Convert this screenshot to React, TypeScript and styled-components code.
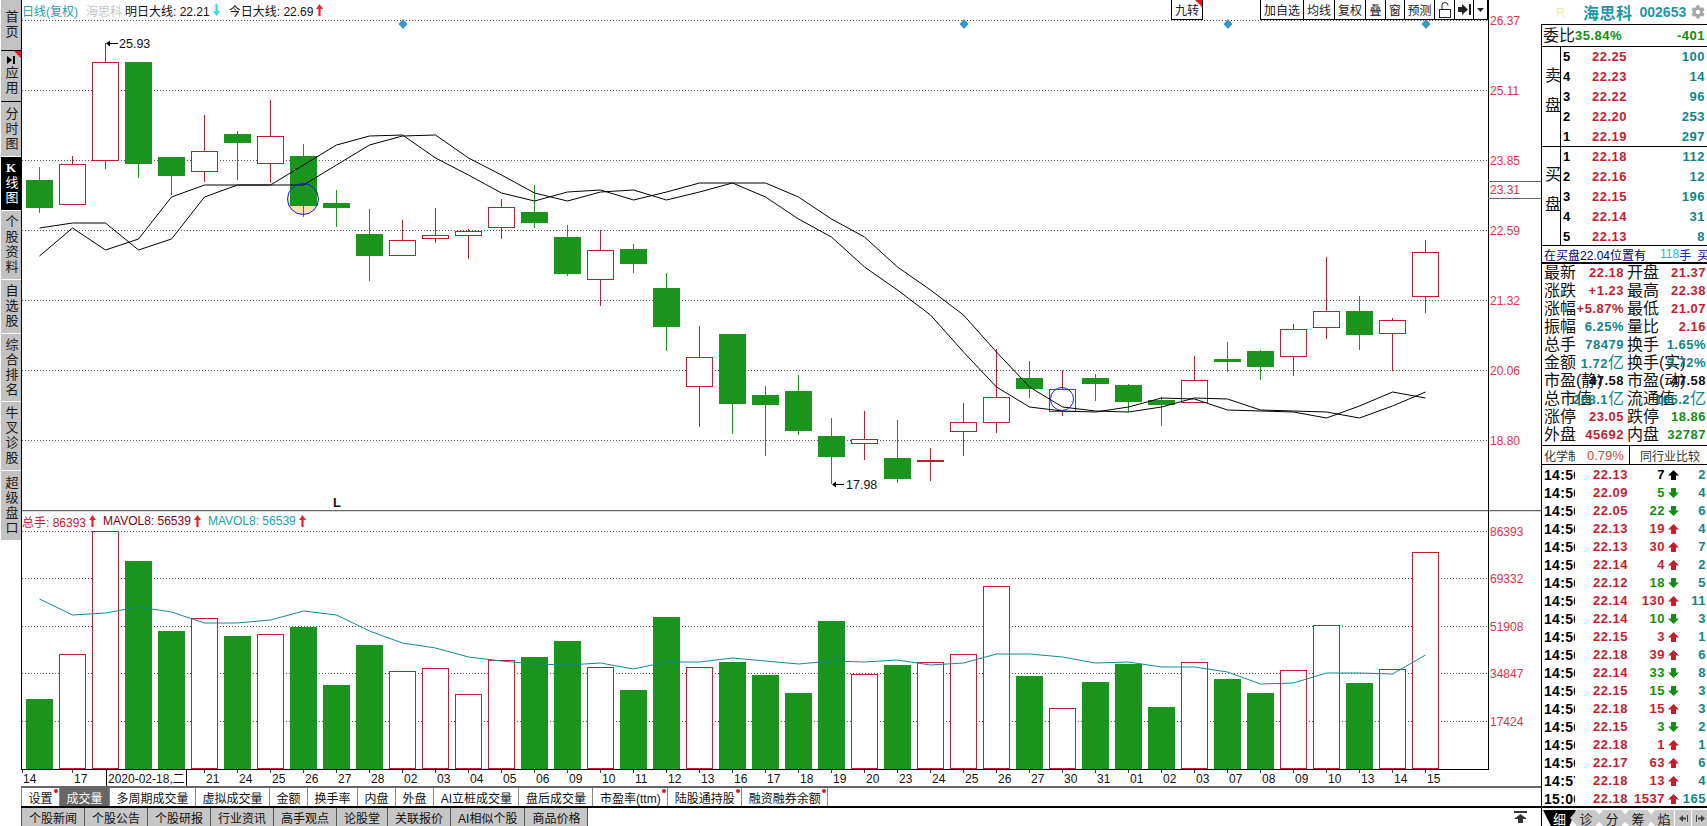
import React from "react";
import styled, { createGlobalStyle } from "styled-components";
import { FaCog } from "react-icons/fa";

const FONT = '"Liberation Sans", "Noto Sans CJK SC", sans-serif';
const RED = "#c41e2e";
const AXIS_RED = "#e4304a";
const GREEN = "#1a941c";
const TEXT_GREEN = "#109010";
const TEAL = "#108488";

const GlobalStyle = createGlobalStyle`
  html, body { margin: 0; padding: 0; background: #fff; overflow: hidden; }
  #root { width: 1707px; height: 826px; }
  * { box-sizing: border-box; }
`;

// [high, body top, body bottom, low, up?] all in page pixels
type Candle = [number, number, number, number, boolean];
const candles: Candle[] = [
  [167, 180, 208, 213, false], [156, 164, 204, 204, true], [43, 62, 160, 169, true], [62, 62, 164, 178, false],
  [157, 157, 176, 195, false], [115, 151, 171, 182, true], [131, 134, 143, 180, false], [100, 136, 163, 183, true],
  [144, 156, 206, 217, false], [190, 203, 208, 227, false], [209, 234, 256, 281, false], [220, 240, 255, 255, true],
  [208, 235, 238, 243, true], [229, 231, 235, 259, true], [199, 207, 227, 239, true], [185, 212, 223, 228, false],
  [225, 237, 274, 276, false], [230, 250, 279, 306, true], [244, 249, 264, 273, false], [273, 288, 327, 351, false],
  [326, 357, 386, 427, true], [334, 334, 404, 434, false], [386, 395, 405, 456, false], [375, 391, 431, 435, false],
  [418, 436, 457, 484, false], [411, 439, 443, 460, true], [420, 458, 479, 483, false], [448, 461, 461, 481, true],
  [403, 422, 431, 456, true], [349, 397, 422, 433, true], [361, 378, 389, 398, false], [370, 389, 411, 416, true],
  [374, 378, 384, 401, false], [384, 385, 402, 412, false], [397, 400, 405, 426, false], [356, 380, 402, 402, true],
  [342, 359, 362, 372, false], [350, 351, 367, 380, false], [324, 329, 356, 376, true], [257, 311, 327, 339, true],
  [296, 311, 335, 350, false], [318, 320, 333, 371, true], [240, 252, 296, 313, true],
];

const fastLine = [
  256, 228, 250, 239, 197, 185, 185, 185, 165, 145, 136, 135, 158, 175, 193, 201, 192, 190, 200, 192, 183, 183,
  197, 219, 237, 267, 290, 315, 352, 387, 407, 411, 412, 407, 398, 399, 410, 411, 412, 418, 406, 392, 398,
];
const slowLine = [228, 223, 223, ...fastLine.slice(2, 42)];

const volumeTops = [
  699, 654, 531, 561, 631, 618, 636, 634, 627, 685, 645, 671, 668, 694, 660, 657, 641, 667, 690, 617, 667, 662,
  675, 693, 621, 674, 665, 662, 654, 586, 676, 708, 682, 664, 707, 662, 679, 693, 670, 625, 683, 669, 552,
];

const volumeMa = [
  599, 615, 613, 607, 612, 623, 623, 620, 611, 615, 631, 643, 648, 657, 661, 664, 665, 663, 669, 662, 662, 658,
  661, 664, 661, 662, 660, 665, 663, 654, 654, 657, 663, 662, 667, 667, 672, 684, 683, 673, 673, 674, 655,
];

const dates = [
  "14", "17", "", "", "", "21", "24", "25", "26", "27", "28", "02", "03", "04", "05", "06", "09", "10", "11", "12",
  "13", "16", "17", "18", "19", "20", "23", "24", "25", "26", "27", "30", "31", "01", "02", "03", "07", "08", "09",
  "10", "13", "14", "15",
];

const priceGrid = [20, 90, 160, 230, 300, 370, 440];
const priceLabels: [string, number][] = [
  ["26.37", 25], ["25.11", 95], ["23.85", 165], ["23.31", 194], ["22.59", 235], ["21.32", 305], ["20.06", 375], ["18.80", 445],
];
const volumeGrid: [number, string][] = [[531, "86393"], [578, "69332"], [626, "51908"], [673, "34847"], [721, "17424"]];
const diamonds = [403, 964, 1228, 1426];

const cx = (i: number) => 39.5 + 33 * i;
const points = (values: number[]) => values.map((y, i) => `${cx(i)},${y}`).join(" ");

const Page = styled.div`
  width: 1707px;
  height: 826px;
  display: grid;
  grid-template-columns: 21px 1520px 166px;
  font-family: ${FONT};
  color: #000;
  background: #fff;
  overflow: hidden;
`;

const Sidebar = styled.nav`
  display: flex;
  flex-direction: column;
  gap: 1px;
  padding-left: 1px;
`;

const SideButton = styled.div<{ $h: number; $active?: boolean; $shadow?: boolean }>`
  position: relative;
  height: ${(p) => p.$h}px;
  background: ${(p) => (p.$active ? "#000" : "#c2c2c2")};
  color: ${(p) => (p.$active ? "#fff" : "#1a1a1a")};
  box-shadow: ${(p) => (p.$shadow ? "0 1px 0 #000" : "none")};
  display: flex;
  flex-direction: column;
  align-items: center;
  justify-content: center;
  gap: 2px;
  font-size: 13px;
  line-height: 13px;
`;

const SideLabel = styled.span`
  writing-mode: vertical-rl;
  text-orientation: upright;
  letter-spacing: 2px;
`;

const SideLetter = styled.b`
  font-family: "Liberation Serif", serif;
`;

const Corner = styled.i<{ $size: number }>`
  position: absolute;
  top: 0;
  right: 0;
  width: 0;
  height: 0;
  border-top: ${(p) => p.$size}px solid #f01020;
  border-left: ${(p) => p.$size}px solid transparent;
`;

const Main = styled.main`
  display: flex;
  flex-direction: column;
`;

const ChartFrame = styled.div`
  border-left: 1px solid #000;
  height: 770px;
`;

const Pane = styled.section`
  position: relative;
`;

const ChartSvg = styled.svg`
  display: block;
  font-family: "Liberation Sans", sans-serif;
`;

const Legend = styled.div<{ $top: number }>`
  position: absolute;
  left: 0;
  top: ${(p) => p.$top}px;
  height: 20px;
  display: flex;
  align-items: center;
  font-size: 12px;
  white-space: nowrap;
`;

const LegendText = styled.span<{ $color: string; $ml?: number }>`
  color: ${(p) => p.$color};
  margin-left: ${(p) => p.$ml ?? 0}px;
`;

const Toolbar = styled.div`
  position: absolute;
  top: 0;
  right: 53px;
  display: flex;
  gap: 58px;
`;

const ToolGroup = styled.div`
  display: flex;
`;

const ToolButton = styled.div<{ $w: number }>`
  position: relative;
  width: ${(p) => p.$w}px;
  height: 20px;
  background: #fff;
  border: 1px solid #000;
  border-top: 0;
  margin-left: -1px;
  display: flex;
  align-items: center;
  justify-content: center;
  font-size: 12px;
  color: #222;
  white-space: nowrap;
`;

const DateStrip = styled.div`
  height: 16px;
`;

const TabRow = styled.div<{ $line: string; $h: number }>`
  height: ${(p) => p.$h}px;
  border-top: ${(p) => p.$line};
  display: flex;
  align-items: stretch;
  background: #fff;
`;

const MetricTab = styled.div<{ $active?: boolean; $dot?: boolean }>`
  position: relative;
  padding: 0 6.5px;
  border-left: 1px solid #888;
  display: flex;
  align-items: center;
  font-size: 12px;
  white-space: nowrap;
  color: ${(p) => (p.$active ? "#fff" : "#111")};
  background: ${(p) => (p.$active ? "#666" : "#fff")};
  &:last-of-type { border-right: 1px solid #888; }
  &::after {
    content: "";
    display: ${(p) => (p.$dot ? "block" : "none")};
    position: absolute;
    top: 1px;
    right: 1px;
    width: 4px;
    height: 4px;
    border-radius: 50%;
    background: #f01020;
  }
`;

const NewsTab = styled.div`
  padding: 0 7px;
  background: #c6c6c6;
  border-left: 1px solid #555;
  border-right: 1px solid #555;
  margin-right: -1px;
  display: flex;
  align-items: center;
  font-size: 12px;
  white-space: nowrap;
  color: #111;
`;

const TopButton = styled.div`
  margin-left: auto;
  margin-right: 14px;
  display: flex;
  align-items: center;
`;

const Panel = styled.aside`
  display: flex;
  flex-direction: column;
`;

const QuoteHead = styled.header`
  height: 24px;
  display: flex;
  align-items: center;
  padding-left: 15px;
  white-space: nowrap;
  color: #1c98a4;
  font-weight: 700;
`;

const HeadMark = styled.span`
  width: 27px;
  font-size: 13px;
  font-weight: 400;
  color: #f0f0a0;
`;

const HeadName = styled.span`
  font-size: 16px;
  letter-spacing: 0.5px;
`;

const HeadCode = styled.span`
  font-size: 14px;
  margin-left: 7px;
  margin-right: 5px;
`;

const PanelBody = styled.div`
  border-left: 1px solid #000;
  border-top: 1px solid #000;
  display: flex;
  flex-direction: column;
`;

const Label = styled.span`
  font-size: 16px;
  line-height: 18px;
  white-space: nowrap;
  color: #111;
`;

const Num = styled.span<{ $color: string }>`
  font-size: 13px;
  font-weight: 700;
  letter-spacing: 0.5px;
  line-height: 18px;
  white-space: nowrap;
  color: ${(p) => p.$color};
`;

const RatioRow = styled.div`
  height: 22px;
  border-bottom: 1px solid #000;
  display: flex;
  align-items: center;
  justify-content: space-between;
  padding: 0 2px 0 1px;
`;

const RatioLeft = styled.div`
  display: flex;
  align-items: center;
`;

const BookSide = styled.div<{ $h: number; $line?: boolean }>`
  height: ${(p) => p.$h}px;
  overflow: hidden;
  display: flex;
  border-bottom: ${(p) => (p.$line ? "1px solid #000" : "0")};
`;

const BookTitle = styled.div`
  width: 19px;
  flex: none;
  border-right: 1px solid #000;
  display: flex;
  align-items: center;
  justify-content: center;
  writing-mode: vertical-rl;
  text-orientation: upright;
  font-size: 16px;
  letter-spacing: 14px;
  color: #111;
`;

const BookRows = styled.div`
  flex: 1;
`;

const BookRow = styled.div`
  height: 20px;
  display: grid;
  grid-template-columns: 11px 57px 1fr;
  align-items: center;
  padding: 0 2px 0 2px;
`;

const Level = styled.span`
  font-size: 13px;
  font-weight: 700;
  line-height: 18px;
`;

const BookPrice = styled(Num)`
  justify-self: end;
  padding-right: 4px;
`;

const BookQty = styled(Num)`
  justify-self: end;
`;

const Notice = styled.div`
  height: 19px;
  border-top: 1px solid #000;
  border-bottom: 2px solid #000;
  display: flex;
  align-items: center;
  padding-left: 2px;
  font-size: 12px;
  color: #000080;
  white-space: nowrap;
  overflow: hidden;
`;

const NoticeCyan = styled.span`
  color: #10c0c8;
  margin-left: 14px;
`;

const NoticeBlue = styled.span`
  color: #0030d0;
`;

const NoticeEnd = styled.span`
  margin-left: 6px;
`;

const Stats = styled.div`
  display: grid;
  grid-template-columns: 83px 83px;
  grid-auto-rows: 18px;
  padding-bottom: 1px;
`;

const StatCell = styled.div<{ $left?: boolean }>`
  display: grid;
  padding: ${(p) => (p.$left ? "0 1px 0 2px" : "0 2px 0 2px")};
  > * { grid-area: 1 / 1; }
`;

const StatValue = styled(Num)`
  justify-self: end;
`;

const Yi = styled.span`
  font-size: 16px;
  font-weight: 400;
  letter-spacing: 0;
`;

const SectorRow = styled.div`
  height: 20px;
  border-top: 1px solid #000;
  border-bottom: 1px solid #000;
  display: flex;
  align-items: center;
  font-size: 12px;
  color: #333;
`;

const SectorName = styled.span`
  width: 31px;
  margin-left: 2px;
  overflow: hidden;
  white-space: nowrap;
`;

const SectorPct = styled.span`
  width: 54px;
  font-size: 13px;
  color: #d84040;
  padding-left: 12px;
`;

const SectorCompare = styled.span`
  flex: 1;
  align-self: stretch;
  border-left: 1px solid #000;
  display: flex;
  align-items: center;
  padding-left: 10px;
  white-space: nowrap;
`;

const Trades = styled.div`
  height: 341px;
  padding-top: 1px;
  overflow: hidden;
`;

const TradeRow = styled.div`
  height: 18px;
  display: grid;
  grid-template-columns: 31px 53px 37px 17px 24px;
  align-items: center;
  padding-left: 2px;
`;

const TradeTime = styled.span`
  font-size: 14px;
  font-weight: 700;
  letter-spacing: 0.3px;
  overflow: hidden;
  white-space: nowrap;
`;

const TradeNum = styled(Num)`
  justify-self: end;
`;

const TradeArrow = styled.svg`
  justify-self: center;
`;

const ViewTabs = styled.div`
  height: 20px;
  border-top: 2px solid #000;
  border-left: 1px solid #000;
  display: flex;
  align-items: flex-end;
  padding-left: 1px;
`;

const ViewTab = styled.div<{ $active?: boolean }>`
  flex: none;
  width: ${(p) => (p.$active ? 33 : 32)}px;
  height: 16px;
  margin-right: -6px;
  display: flex;
  align-items: center;
  justify-content: center;
  font-size: 13px;
  color: ${(p) => (p.$active ? "#fff" : "#222")};
  background: ${(p) => (p.$active ? "#000" : "#c8c8c8")};
  clip-path: ${(p) =>
    p.$active
      ? "polygon(0 0, 100% 0, 80% 100%, 24% 100%)"
      : "polygon(22% 0, 80% 0, 100% 50%, 80% 100%, 22% 100%, 0 50%)"};
`;

const ScrollGroup = styled.div`
  margin-left: auto;
  display: flex;
  position: relative;
`;

const ScrollButton = styled.div`
  width: 17px;
  height: 16px;
  background: #c8c8c8;
  border-left: 1px solid #fff;
  display: flex;
  align-items: center;
  justify-content: center;
`;

function BigArrow({ up, color }: { up: boolean; color: string }) {
  return (
    <svg width="7" height="12" viewBox="0 0 7 12" style={{ transform: up ? "none" : "rotate(180deg)", marginLeft: 3 }}>
      <polygon points="3.5,0 7,5 4.6,5 4.6,12 2.4,12 2.4,5 0,5" fill={color} />
    </svg>
  );
}

function CandleMark({ c, i }: { c: Candle; i: number }) {
  const [high, top, bottom, low, up] = c;
  const x = cx(i);
  const color = up ? RED : GREEN;
  return (
    <g>
      <line x1={x} x2={x} y1={high} y2={low} stroke={color} strokeWidth="1" shapeRendering="crispEdges" />
      {top === bottom ? (
        <rect x={x - 13.5} y={top - 1} width={27} height={2} fill={color} shapeRendering="crispEdges" />
      ) : up ? (
        <rect x={x - 13} y={top + 0.5} width={26} height={bottom - top} fill="#fff" stroke={RED} strokeWidth="1" shapeRendering="crispEdges" />
      ) : (
        <rect x={x - 13.5} y={top} width={27} height={bottom - top} fill={GREEN} shapeRendering="crispEdges" />
      )}
    </g>
  );
}

function PriceChart() {
  return (
    <ChartSvg width="1519" height="510" viewBox="22 0 1519 510">
      {priceGrid.map((y) => (
        <line key={y} x1="22" x2="1488" y1={y + 0.5} y2={y + 0.5} stroke="#555" strokeDasharray="1 2" shapeRendering="crispEdges" />
      ))}
      {diamonds.map((x) => (
        <polygon key={x} points={`${x},19 ${x + 4.5},24 ${x},29 ${x - 4.5},24`} fill="#3399c8" />
      ))}
      <circle cx="303" cy="199" r="15.5" fill="#f8e0b0" />
      {candles.map((c, i) => (
        <CandleMark key={i} c={c} i={i} />
      ))}
      <polyline points={points(fastLine)} fill="none" stroke="#000" strokeWidth="1" />
      <polyline points={points(slowLine)} fill="none" stroke="#000" strokeWidth="1" />
      <circle cx="303" cy="199" r="15.5" fill="none" stroke="#1020e0" strokeWidth="1" />
      <circle cx="1062" cy="399" r="11.5" fill="none" stroke="#1020e0" strokeWidth="1" />
      <polygon points="106,43.5 110,40.5 110,46.5" fill="#000" />
      <line x1="109" x2="118" y1="43.5" y2="43.5" stroke="#000" />
      <text x="119" y="48" fontSize="12.5" fill="#111">25.93</text>
      <polygon points="832,484.5 836,481.5 836,487.5" fill="#000" />
      <line x1="835" x2="844" y1="484.5" y2="484.5" stroke="#000" />
      <text x="846" y="489" fontSize="12.5" fill="#111">17.98</text>
      <text x="333" y="507" fontSize="13" fontWeight="700" fill="#111">L</text>
      <line x1="1488.5" x2="1488.5" y1="0" y2="510" stroke="#000" shapeRendering="crispEdges" />
      <line x1="1488" x2="1541" y1="181.5" y2="181.5" stroke="#666" shapeRendering="crispEdges" />
      <line x1="1488" x2="1541" y1="198.5" y2="198.5" stroke="#666" shapeRendering="crispEdges" />
      {priceLabels.map(([t, y]) => (
        <text key={t} x="1490" y={y} fontSize="12" fill={AXIS_RED}>{t}</text>
      ))}
    </ChartSvg>
  );
}

function VolumeChart() {
  return (
    <ChartSvg width="1519" height="260" viewBox="22 510 1519 260">
      <line x1="22" x2="1541" y1="510.5" y2="510.5" stroke="#666" strokeWidth="1.5" />
      {volumeGrid.map(([y]) => (
        <line key={y} x1="22" x2="1488" y1={y + 0.5} y2={y + 0.5} stroke="#555" strokeDasharray="1 2" shapeRendering="crispEdges" />
      ))}
      {volumeTops.map((top, i) =>
        candles[i][4] ? (
          <rect key={i} x={cx(i) - 13} y={top + 0.5} width={26} height={768 - top} fill="#fff" stroke={RED} shapeRendering="crispEdges" />
        ) : (
          <rect key={i} x={cx(i) - 13.5} y={top} width={27} height={769 - top} fill={GREEN} shapeRendering="crispEdges" />
        )
      )}
      <polyline points={points(volumeMa)} fill="none" stroke="#0f8890" strokeWidth="1" />
      <line x1="1488.5" x2="1488.5" y1="510" y2="770" stroke="#000" shapeRendering="crispEdges" />
      <line x1="22" x2="1489" y1="769.5" y2="769.5" stroke="#000" shapeRendering="crispEdges" />
      {volumeGrid.map(([y, t]) => (
        <text key={t} x="1490" y={y + 5} fontSize="12" fill={AXIS_RED}>{t}</text>
      ))}
    </ChartSvg>
  );
}

function DateAxis() {
  return (
    <DateStrip>
      <ChartSvg width="1520" height="16" viewBox="21 770 1520 16">
        {dates.map((d, i) =>
          d ? (
            <g key={i}>
              <line x1={i === 0 ? 22.5 : cx(i)} x2={i === 0 ? 22.5 : cx(i)} y1="770" y2="773" stroke="#333" shapeRendering="crispEdges" />
              <text x={i === 0 ? 23 : cx(i) + 1.5} y="783" fontSize="12" fill="#111">{d}</text>
            </g>
          ) : null
        )}
        <line x1="106.5" x2="106.5" y1="770" y2="786" stroke="#000" shapeRendering="crispEdges" />
        <line x1="186.5" x2="186.5" y1="770" y2="786" stroke="#000" shapeRendering="crispEdges" />
        <text x="108" y="783" fontSize="12" fill="#111" fontFamily={FONT}>2020-02-18,二</text>
      </ChartSvg>
    </DateStrip>
  );
}

type Stat = { label: string; value: string; color: string; unit?: string };
const statsRows: Stat[] = [
  { label: "最新", value: "22.18", color: RED }, { label: "开盘", value: "21.37", color: RED },
  { label: "涨跌", value: "+1.23", color: RED }, { label: "最高", value: "22.38", color: RED },
  { label: "涨幅", value: "+5.87%", color: RED }, { label: "最低", value: "21.07", color: RED },
  { label: "振幅", value: "6.25%", color: TEAL }, { label: "量比", value: "2.16", color: RED },
  { label: "总手", value: "78479", color: TEAL }, { label: "换手", value: "1.65%", color: TEAL },
  { label: "金额", value: "1.72", color: TEAL, unit: "亿" }, { label: "换手(实)", value: "3.72%", color: TEAL },
  { label: "市盈(静)", value: "47.58", color: "#111" }, { label: "市盈(动)", value: "47.58", color: "#111" },
  { label: "总市值", value: "208.1", color: TEAL, unit: "亿" }, { label: "流通值", value: "105.2", color: TEAL, unit: "亿" },
  { label: "涨停", value: "23.05", color: RED }, { label: "跌停", value: "18.86", color: TEXT_GREEN },
  { label: "外盘", value: "45692", color: RED }, { label: "内盘", value: "32787", color: TEXT_GREEN },
];

const asks: [number, string, string][] = [[5, "22.25", "100"], [4, "22.23", "14"], [3, "22.22", "96"], [2, "22.20", "253"], [1, "22.19", "297"]];
const bids: [number, string, string][] = [[1, "22.18", "112"], [2, "22.16", "12"], [3, "22.15", "196"], [4, "22.14", "31"], [5, "22.13", "8"]];

// time, price, volume, direction (r/g/k), count
type Trade = [string, string, string, "r" | "g" | "k", string];
const trades: Trade[] = [
  ["14:56", "22.13", "7", "k", "2"], ["14:56", "22.09", "5", "g", "4"], ["14:56", "22.05", "22", "g", "6"],
  ["14:56", "22.13", "19", "r", "4"], ["14:56", "22.13", "30", "r", "7"], ["14:56", "22.14", "4", "r", "2"],
  ["14:56", "22.12", "18", "g", "5"], ["14:56", "22.14", "130", "r", "11"], ["14:56", "22.14", "10", "g", "3"],
  ["14:56", "22.15", "3", "r", "1"], ["14:56", "22.18", "39", "r", "6"], ["14:56", "22.14", "33", "g", "8"],
  ["14:56", "22.15", "15", "g", "3"], ["14:56", "22.18", "15", "r", "3"], ["14:56", "22.15", "3", "g", "2"],
  ["14:56", "22.18", "1", "r", "1"], ["14:56", "22.17", "63", "r", "6"], ["14:57", "22.18", "13", "r", "4"],
  ["15:00", "22.18", "1537", "r", "165"],
];

const tradeColors = { r: RED, g: TEXT_GREEN, k: "#000" };

function TradeRowItem({ t }: { t: Trade }) {
  const [time, price, vol, dir, count] = t;
  const color = tradeColors[dir];
  return (
    <TradeRow>
      <TradeTime>{time}</TradeTime>
      <TradeNum $color={RED}>{price}</TradeNum>
      <TradeNum $color={color}>{vol}</TradeNum>
      <TradeArrow width="11" height="10" viewBox="0 0 11 10" style={{ transform: dir === "g" ? "rotate(180deg)" : "none" }}>
        <polygon points="5.5,0 11,5.5 8,5.5 8,10 3,10 3,5.5 0,5.5" fill={color} />
      </TradeArrow>
      <TradeNum $color={TEAL}>{count}</TradeNum>
    </TradeRow>
  );
}

function BookRowItem({ r }: { r: [number, string, string] }) {
  return (
    <BookRow>
      <Level>{r[0]}</Level>
      <BookPrice $color={RED}>{r[1]}</BookPrice>
      <BookQty $color={TEAL}>{r[2]}</BookQty>
    </BookRow>
  );
}

export default function App() {
  return (
    <Page>
      <GlobalStyle />
      <Sidebar>
        <SideButton $h={50} $shadow><SideLabel>首页</SideLabel></SideButton>
        <SideButton $h={50} $shadow>
          <Corner $size={7} />
          <svg width="8" height="8" viewBox="0 0 8 8">
            <polygon points="0,0 5,4 0,8" fill="#000" />
            <rect x="6" y="0" width="2" height="8" fill="#000" />
          </svg>
          <SideLabel>应用</SideLabel>
        </SideButton>
        <SideButton $h={54}><SideLabel>分时图</SideLabel></SideButton>
        <SideButton $h={53} $active>
          <SideLetter>K</SideLetter>
          <SideLabel>线图</SideLabel>
        </SideButton>
        <SideButton $h={68}><SideLabel>个股资料</SideLabel></SideButton>
        <SideButton $h={53}><SideLabel>自选股</SideLabel></SideButton>
        <SideButton $h={67}><SideLabel>综合排名</SideLabel></SideButton>
        <SideButton $h={68}><SideLabel>牛叉诊股</SideLabel></SideButton>
        <SideButton $h={69}><SideLabel>超级盘口</SideLabel></SideButton>
      </Sidebar>

      <Main>
        <ChartFrame>
          <Pane>
            <PriceChart />
            <Legend $top={0}>
              <LegendText $color="#20a4b4">日线(复权)</LegendText>
              <LegendText $color="#c4c4c4" $ml={8}>海思科</LegendText>
              <LegendText $color="#111" $ml={3}>明日大线: 22.21</LegendText>
              <BigArrow up={false} color="#30d8f0" />
              <LegendText $color="#111" $ml={9}>今日大线: 22.69</LegendText>
              <BigArrow up color="#f02030" />
            </Legend>
            <Toolbar>
              <ToolButton $w={32}>九转<Corner $size={7} /></ToolButton>
              <ToolGroup>
                <ToolButton $w={44}>加自选</ToolButton>
                <ToolButton $w={32}>均线</ToolButton>
                <ToolButton $w={32}>复权</ToolButton>
                <ToolButton $w={21}>叠</ToolButton>
                <ToolButton $w={20}>窗</ToolButton>
                <ToolButton $w={31}>预测</ToolButton>
                <ToolButton $w={21}>
                  <svg width="12" height="16" viewBox="0 0 12 16" fill="none" stroke="#222" strokeWidth="1">
                    <path d="M3 7V3.5a3 3 0 0 1 6 0" />
                    <rect x="0.5" y="7.5" width="11" height="8" />
                  </svg>
                </ToolButton>
                <ToolButton $w={20}>
                  <svg width="13" height="11" viewBox="0 0 13 11" fill="#222">
                    <rect x="0" y="3" width="4" height="5" />
                    <polygon points="4,0 10,5.5 4,11" />
                    <rect x="11" y="0" width="2" height="11" />
                  </svg>
                </ToolButton>
                <ToolButton $w={15}>
                  <svg width="7" height="4" viewBox="0 0 7 4"><polygon points="0,0 7,0 3.5,4" fill="#222" /></svg>
                </ToolButton>
              </ToolGroup>
            </Toolbar>
          </Pane>
          <Pane>
            <VolumeChart />
            <Legend $top={1}>
              <LegendText $color="#c82030">总手: 86393</LegendText>
              <BigArrow up color="#f02030" />
              <LegendText $color="#800020" $ml={7}>MAVOL8: 56539</LegendText>
              <BigArrow up color="#f02030" />
              <LegendText $color="#20a0b0" $ml={7}>MAVOL8: 56539</LegendText>
              <BigArrow up color="#f02030" />
            </Legend>
          </Pane>
        </ChartFrame>
        <DateAxis />
        <TabRow $line="2px solid #666" $h={20}>
          <MetricTab $dot>设置</MetricTab>
          <MetricTab $active>成交量</MetricTab>
          <MetricTab>多周期成交量</MetricTab>
          <MetricTab>虚拟成交量</MetricTab>
          <MetricTab>金额</MetricTab>
          <MetricTab>换手率</MetricTab>
          <MetricTab>内盘</MetricTab>
          <MetricTab>外盘</MetricTab>
          <MetricTab>AI立桩成交量</MetricTab>
          <MetricTab>盘后成交量</MetricTab>
          <MetricTab $dot>市盈率(ttm)</MetricTab>
          <MetricTab $dot>陆股通持股</MetricTab>
          <MetricTab $dot>融资融券余额</MetricTab>
        </TabRow>
        <TabRow $line="2px solid #000" $h={20}>
          <NewsTab>个股新闻</NewsTab>
          <NewsTab>个股公告</NewsTab>
          <NewsTab>个股研报</NewsTab>
          <NewsTab>行业资讯</NewsTab>
          <NewsTab>高手观点</NewsTab>
          <NewsTab>论股堂</NewsTab>
          <NewsTab>关联报价</NewsTab>
          <NewsTab>AI相似个股</NewsTab>
          <NewsTab>商品价格</NewsTab>
          <TopButton>
            <svg width="13" height="12" viewBox="0 0 13 12" fill="#333">
              <rect x="0" y="0" width="13" height="2" />
              <polygon points="6.5,3 13,8 9,8 9,12 4,12 4,8 0,8" />
            </svg>
          </TopButton>
        </TabRow>
      </Main>

      <Panel>
        <QuoteHead>
          <HeadMark>R</HeadMark>
          <HeadName>海思科</HeadName>
          <HeadCode>002653</HeadCode>
          <FaCog size={14} color="#a8a8a8" />
        </QuoteHead>
        <PanelBody>
          <RatioRow>
            <RatioLeft>
              <Label>委比</Label>
              <Num $color={TEXT_GREEN}>35.84%</Num>
            </RatioLeft>
            <Num $color={TEXT_GREEN}>-401</Num>
          </RatioRow>
          <BookSide $h={100} $line>
            <BookTitle>卖盘</BookTitle>
            <BookRows>{asks.map((r) => <BookRowItem key={r[0]} r={r} />)}</BookRows>
          </BookSide>
          <BookSide $h={98}>
            <BookTitle>买盘</BookTitle>
            <BookRows>{bids.map((r) => <BookRowItem key={r[0]} r={r} />)}</BookRows>
          </BookSide>
          <Notice>
            在买盘22.04位置有
            <NoticeCyan>118</NoticeCyan>
            <NoticeBlue>手</NoticeBlue>
            <NoticeEnd>买</NoticeEnd>
          </Notice>
          <Stats>
            {statsRows.map((s, i) => (
              <StatCell key={s.label} $left={i % 2 === 0}>
                <Label>{s.label}</Label>
                <StatValue $color={s.color}>
                  {s.value}
                  {s.unit ? <Yi>{s.unit}</Yi> : null}
                </StatValue>
              </StatCell>
            ))}
          </Stats>
          <SectorRow>
            <SectorName>化学制品</SectorName>
            <SectorPct>0.79%</SectorPct>
            <SectorCompare>同行业比较</SectorCompare>
          </SectorRow>
          <Trades>
            {trades.map((t, i) => <TradeRowItem key={i} t={t} />)}
          </Trades>
        </PanelBody>
        <ViewTabs>
          <ViewTab $active>细</ViewTab>
          <ViewTab>诊</ViewTab>
          <ViewTab>分</ViewTab>
          <ViewTab>筹</ViewTab>
          <ViewTab>焰</ViewTab>
          <ScrollGroup>
            <ScrollButton>
              <svg width="9" height="7" viewBox="0 0 9 7" fill="#444"><polygon points="0,3.5 4,0 4,7" /><rect x="4" y="2.5" width="3" height="2" /><rect x="8" y="0" width="1" height="7" /></svg>
            </ScrollButton>
            <ScrollButton>
              <svg width="9" height="7" viewBox="0 0 9 7" fill="#444"><rect x="0" y="0" width="1" height="7" /><rect x="2" y="2.5" width="3" height="2" /><polygon points="9,3.5 5,0 5,7" /></svg>
            </ScrollButton>
          </ScrollGroup>
        </ViewTabs>
      </Panel>
    </Page>
  );
}
